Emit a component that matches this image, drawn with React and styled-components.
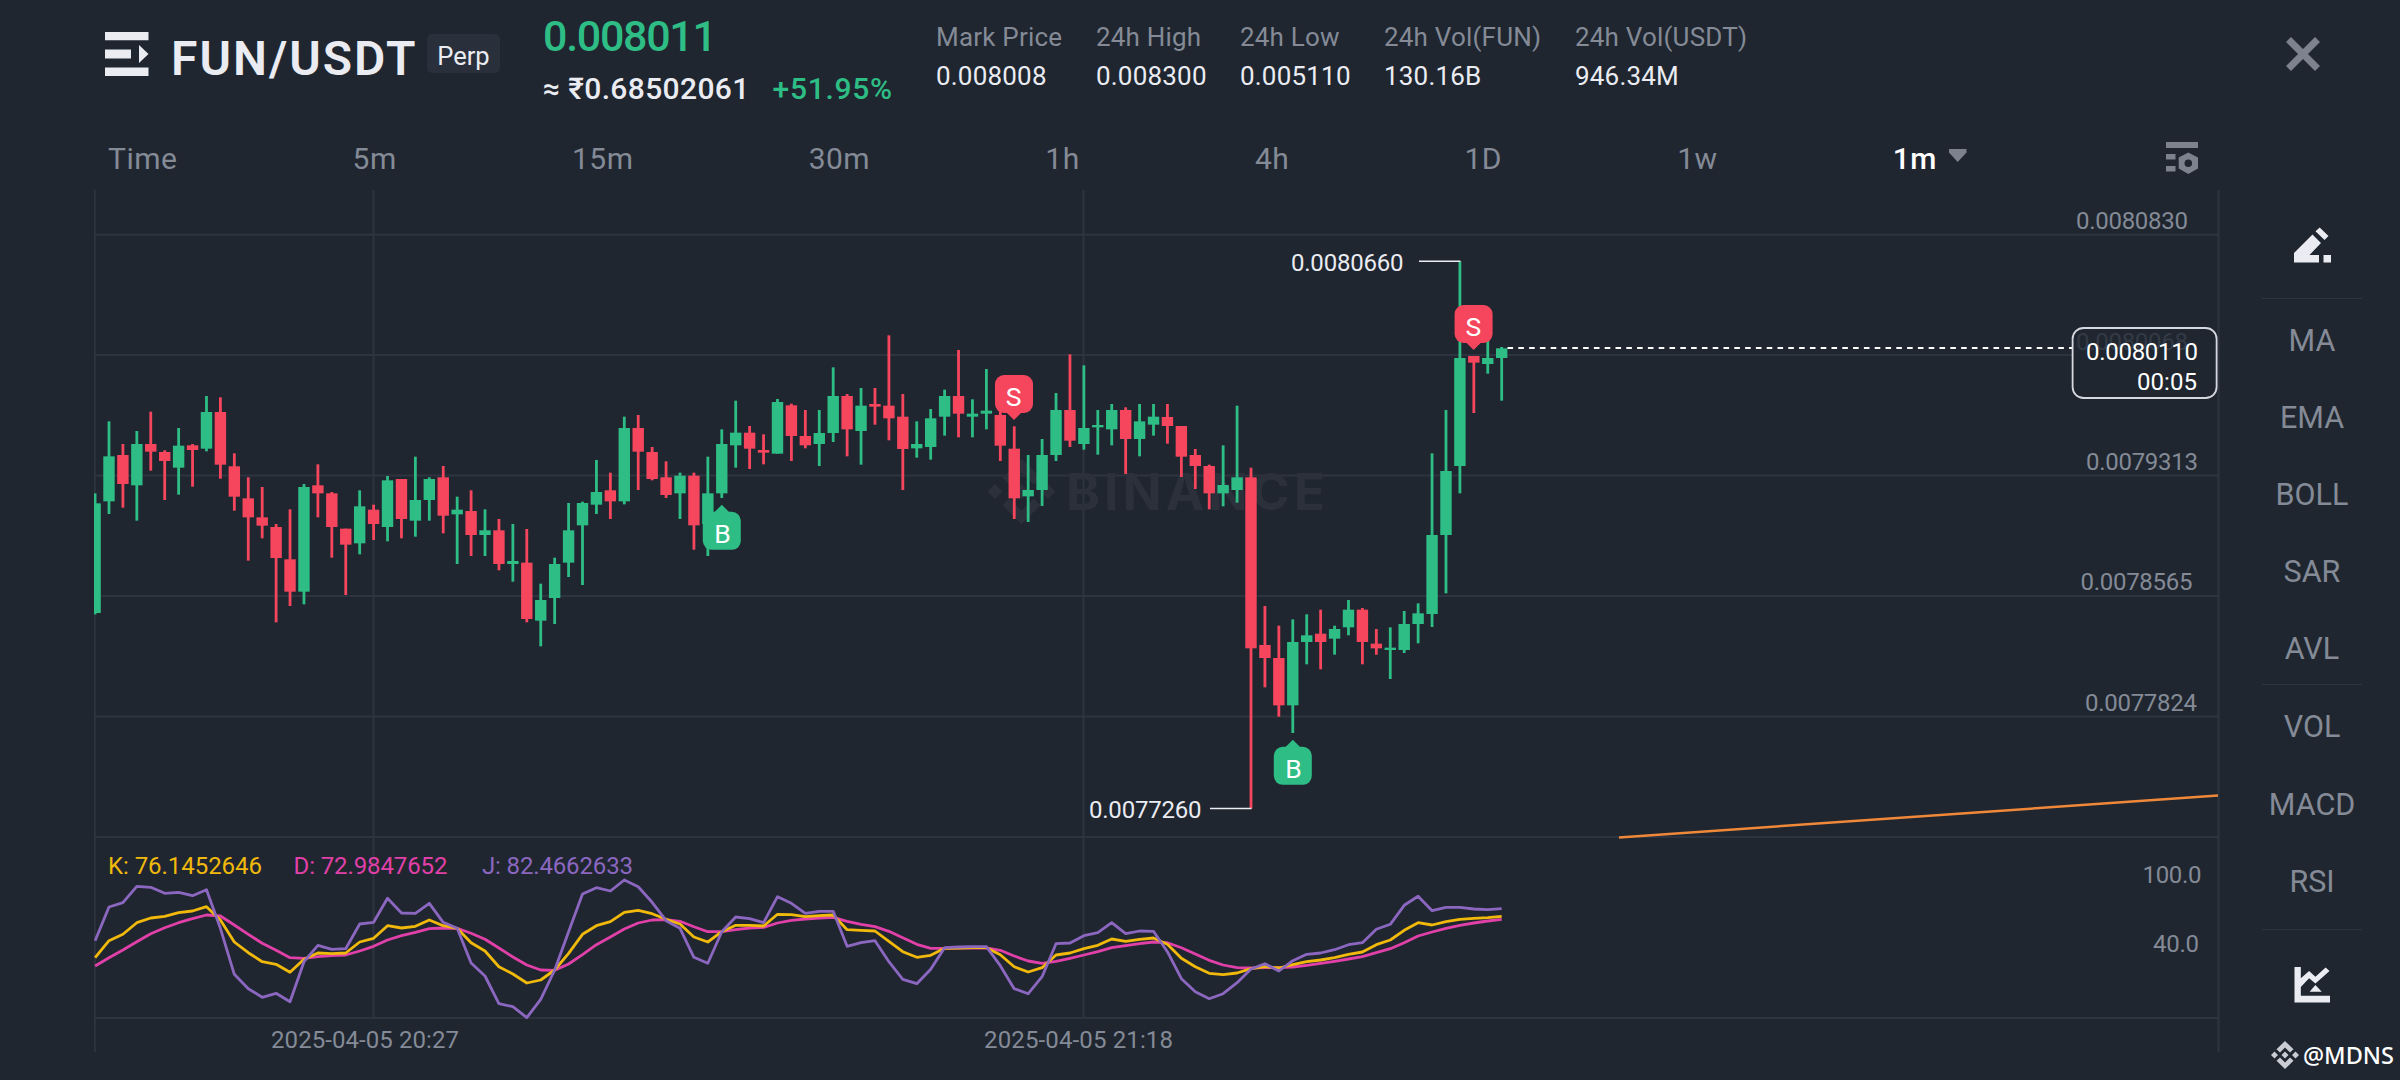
import React, { useState } from "react";
import styled, { createGlobalStyle } from "styled-components";

const UP = "#2ebd85";
const DOWN = "#f6465d";
const GRID = "#2e343f";
const MUTED = "#848a96";
const WHITE = "#eaecf2";

const FIRST_X = 95.06;
const STEP = 13.927;
const xOf = (i) => FIRST_X + STEP * i;

// each bar: direction, high, body top, body bottom, low (thirds of a pixel below `top`)
const segments = [
  {
    top: 350,
    bars: [
      ["u", 430, 460, 789, 793],
      ["u", 214, 319, 454, 492],
      ["d", 282, 315, 402, 473],
      ["u", 243, 282, 406, 512],
      ["d", 185, 282, 305, 362],
      ["d", 301, 306, 333, 450],
      ["u", 234, 287, 353, 434],
      ["d", 282, 286, 300, 410],
      ["u", 138, 186, 296, 304],
      ["d", 142, 186, 344, 386],
      ["d", 310, 349, 440, 482],
      ["d", 382, 445, 502, 632],
      ["d", 411, 502, 527, 565],
      ["d", 522, 531, 624, 817],
      ["d", 478, 628, 725, 768],
      ["u", 402, 411, 725, 763],
      ["d", 343, 406, 430, 502],
      ["d", 426, 430, 531, 623],
      ["d", 536, 536, 584, 735],
      ["u", 421, 469, 580, 613],
      ["d", 464, 479, 522, 570],
      ["u", 378, 391, 531, 574],
      ["d", 387, 387, 507, 565],
      ["u", 320, 450, 512, 560],
      ["u", 382, 387, 450, 512],
      ["d", 348, 382, 497, 550],
      ["u", 440, 479, 493, 642],
      ["d", 421, 483, 555, 618],
      ["u", 478, 541, 555, 618],
      ["d", 507, 541, 642, 661],
      ["u", 522, 633, 642, 695],
      ["d", 537, 638, 807, 817],
      ["u", 701, 750, 812, 889],
      ["u", 623, 642, 744, 822],
      ["u", 459, 541, 638, 681],
      ["u", 455, 459, 526, 705],
      ["u", 330, 426, 464, 492],
      ["d", 368, 421, 454, 507],
      ["u", 200, 234, 454, 463],
      ["d", 195, 234, 305, 420],
      ["d", 291, 306, 387, 391],
      ["d", 334, 382, 435, 444],
      ["u", 368, 377, 430, 507],
      ["d", 368, 377, 526, 599],
      ["u", 320, 430, 522, 618],
      ["u", 238, 282, 430, 444],
      ["u", 152, 248, 286, 353],
      ["d", 228, 248, 296, 357],
      ["d", 253, 300, 308, 343],
      ["u", 147, 156, 311, 311],
      ["d", 161, 166, 258, 333],
    ],
  },
  {
    top: 320,
    bars: [
      ["d", 270, 348, 376, 385],
      ["u", 270, 339, 372, 438],
      ["u", 142, 228, 339, 366],
      ["d", 222, 228, 328, 409],
      ["u", 204, 257, 333, 434],
      ["d", 204, 252, 260, 314],
      ["d", 46, 257, 295, 361],
      ["d", 222, 290, 387, 510],
      ["u", 304, 372, 385, 413],
      ["u", 267, 295, 381, 419],
      ["u", 209, 228, 290, 347],
      ["d", 90, 228, 281, 352],
      ["u", 238, 281, 290, 352],
      ["u", 147, 272, 281, 328],
      ["d", 262, 285, 377, 423],
      ["d", 319, 386, 535, 597],
      ["u", 405, 510, 529, 606],
      ["u", 357, 405, 510, 558],
      ["u", 219, 270, 405, 423],
      ["d", 103, 270, 362, 381],
      ["u", 136, 324, 372, 389],
      ["u", 270, 315, 322, 404],
      ["u", 252, 270, 328, 376],
      ["d", 262, 270, 357, 462],
      ["u", 252, 304, 357, 409],
      ["u", 252, 290, 314, 347],
    ],
  },
  {
    top: 330,
    bars: [
      ["d", 222, 261, 288, 341],
      ["d", 288, 288, 380, 441],
      ["d", 357, 375, 408, 477],
      ["d", 404, 408, 490, 538],
      ["u", 346, 465, 490, 529],
      ["u", 227, 442, 480, 518],
      ["d", 413, 442, 955, 1436],
      ["d", 828, 945, 984, 1072],
      ["d", 887, 984, 1126, 1160],
      ["u", 868, 936, 1126, 1209],
      ["u", 853, 916, 936, 1003],
      ["d", 839, 911, 936, 1018],
      ["u", 887, 897, 926, 974],
      ["u", 810, 839, 892, 916],
      ["d", 834, 839, 936, 1003],
      ["d", 897, 941, 955, 974],
      ["u", 892, 953, 960, 1047],
      ["u", 843, 882, 960, 969],
      ["u", 820, 850, 882, 940],
    ],
  },
  {
    top: 220,
    bars: [
      ["u", 700, 945, 1182, 1221],
      ["u", 570, 753, 945, 1120],
      ["u", 124, 414, 738, 820],
      ["d", 408, 408, 428, 579],
      ["u", 340, 414, 432, 461],
      ["u", 381, 385, 414, 542],
    ],
  },
];

const candles = segments
  .flatMap(({ top, bars }) =>
    bars.map(([dir, ...ys]) => [dir, ...ys.map((y) => top + y / 3)])
  )
  .map(([dir, high, open, close, low], i) => ({
    x: xOf(i),
    color: dir === "u" ? UP : DOWN,
    high,
    open,
    close,
    low,
  }));

const kdj = [
  {
    name: "D",
    color: "#e040a8",
    values: [
      438, 413, 390, 365, 341, 323, 308, 296, 285, 288, 315, 343, 370, 391, 413,
      415, 410, 407, 405, 393, 379, 360, 347, 337, 326, 324, 325, 340, 358, 384,
      411, 435, 450, 451, 432, 404, 374, 351, 327, 309, 300, 299, 304, 320, 335,
      335, 329, 324, 322, 309, 301, 297, 294, 292, 304, 313, 320, 334, 353, 373,
      385, 385, 384, 384, 384, 391, 408, 423, 430, 424, 415, 405, 395, 383, 377,
      371, 366, 368, 383, 402, 421, 435, 443, 444, 443, 443, 441, 436, 430, 424,
      417, 410, 398, 386, 368, 348, 336, 325, 316, 309, 303, 298,
    ],
  },
  {
    name: "K",
    color: "#f0b90b",
    values: [
      413, 362, 343, 308, 294, 289, 278, 273, 260, 300, 366, 398, 425, 433, 457,
      418, 399, 401, 399, 366, 355, 317, 324, 319, 300, 317, 325, 368, 393, 440,
      462, 489, 480, 450, 400, 343, 317, 305, 277, 271, 281, 298, 312, 351, 366,
      335, 316, 316, 318, 283, 284, 290, 287, 285, 329, 331, 333, 364, 395, 412,
      406, 385, 384, 383, 383, 404, 440, 456, 443, 405, 399, 386, 376, 357, 364,
      358, 354, 373, 415, 440, 460, 464, 459, 446, 440, 444, 434, 425, 420, 413,
      403, 396, 374, 360, 331, 308, 315, 305, 298, 295, 293, 289,
    ],
  },
  {
    name: "J",
    color: "#8b67c0",
    values: [
      362, 261, 248, 199, 202, 220, 217, 227, 209, 325, 463, 506, 532, 520, 545,
      425, 376, 388, 386, 312, 307, 235, 279, 280, 250, 307, 325, 429, 468, 551,
      560, 593, 538, 450, 335, 222, 203, 213, 180, 200, 247, 302, 325, 412, 430,
      335, 291, 296, 308, 230, 250, 280, 274, 274, 379, 368, 362, 425, 478, 491,
      448, 383, 381, 380, 380, 437, 506, 521, 470, 371, 369, 347, 338, 308, 341,
      333, 334, 395, 476, 515, 536, 521, 488, 447, 431, 453, 422, 403, 399, 389,
      374, 368, 328, 313, 256, 229, 272, 262, 262, 267, 269, 266,
    ],
  },
];

const kdjPoints = (values) =>
  values.map((v, i) => `${xOf(i).toFixed(1)},${(820 + v / 3).toFixed(1)}`).join(" ");

const stats = [
  { label: "Mark Price", value: "0.008008", width: 160 },
  { label: "24h High", value: "0.008300", width: 144 },
  { label: "24h Low", value: "0.005110", width: 144 },
  { label: "24h Vol(FUN)", value: "130.16B", width: 191 },
  { label: "24h Vol(USDT)", value: "946.34M", width: 190 },
];

const intervals = ["Time", "5m", "15m", "30m", "1h", "4h", "1D", "1w", "1m"];

const priceLabels = [
  { x: 2076, y: 229, text: "0.0080830" },
  { x: 2086, y: 470, text: "0.0079313" },
  { x: 2080.5, y: 589.7, text: "0.0078565" },
  { x: 2085, y: 711, text: "0.0077824" },
];

const trades = [
  { x: 1014, y: 394, side: "S" },
  { x: 1473.6, y: 324, side: "S" },
  { x: 721.8, y: 530.8, side: "B" },
  { x: 1292.8, y: 765.8, side: "B" },
];

function TradeMark({ x, y, side }) {
  const buy = side === "B";
  return (
    <g transform={`translate(${x} ${y})`} fill={buy ? UP : DOWN}>
      <rect x="-19" y="-19" width="38" height="38" rx="9" />
      <path d={buy ? "M-8 -18L0 -26L8 -18Z" : "M-8 18L0 26L8 18Z"} />
      <Label x={buy ? 0.8 : -0.3} y="11.800" fontSize="26.500" textAnchor="middle" fill="#fff">
        {side}
      </Label>
    </g>
  );
}

function Chart() {
  return (
    <ChartSvg viewBox="94 190 2126 862">
      <g stroke={GRID} strokeWidth="2">
        {[234.8, 355, 475.5, 596, 716.5, 837, 1018].map((y) => (
          <line key={y} x1="94" x2="2218" y1={y} y2={y} />
        ))}
        <line x1="373.5" x2="373.5" y1="190" y2="1018" />
        <line x1="1083.5" x2="1083.5" y1="190" y2="1018" />
        <line x1="94.8" x2="94.8" y1="190" y2="1052" />
        <line x1="2218.5" x2="2218.5" y1="190" y2="1052" />
      </g>

      <g fill="#2b303b">
        <g transform="translate(1021.5 491.5) scale(1.06)">
          <path d="M0 -31L18 -13L11.500 -6.500L0 -18L-11.500 -6.500L-18 -13Z" />
          <path d="M0 31L18 13L11.500 6.500L0 18L-11.500 6.500L-18 13Z" />
          <path d="M0 -7L7 0L0 7L-7 0Z" />
          <path d="M-25 -7L-18 0L-25 7L-32 0Z" />
          <path d="M25 -7L32 0L25 7L18 0Z" />
        </g>
        <text
          x="1066"
          y="509.800"
          fontFamily="Inter, sans-serif"
          fontWeight="700"
          fontSize="51.500"
          textLength="259"
        >
          BINANCE
        </text>
      </g>

      <path d="M1619 837.500Q1900 816.500 2218 795.500" fill="none" stroke="#f0883a" strokeWidth="2.500" />

      {candles.map(({ x, color, high, open, close, low }, i) => (
        <g key={i} fill={color}>
          <rect x={x - 1.4} y={high} width="2.8" height={low - high} />
          <rect
            x={Math.max(x - 5.7, 94.5)}
            y={open}
            width={i ? 11.4 : 6.3}
            height={close - open}
          />
        </g>
      ))}

      <line
        x1="1507.5"
        x2="2072"
        y1="348"
        y2="348"
        stroke="#fff"
        strokeWidth="1.8"
        strokeDasharray="5.6 5.2"
      />
      <path d="M1419 261.300H1460.500M1210 808.500H1251.500" stroke={WHITE} strokeWidth="1.600" />
      <Label x="1291" y="271" fill={WHITE} textLength="112.500">
        0.0080660
      </Label>
      <Label x="1089" y="818" fill={WHITE} textLength="112.500">
        0.0077260
      </Label>

      {trades.map((t) => (
        <TradeMark key={t.x} {...t} />
      ))}

      {priceLabels.map(({ x, y, text }) => (
        <Label key={text} x={x} y={y} textLength="112">
          {text}
        </Label>
      ))}
      <Label x="2142.500" y="883" textLength="59">100.0</Label>
      <Label x="2153" y="951.500" textLength="46">40.0</Label>

      <rect x="2072.600" y="328" width="144" height="70" rx="11" fill="#1f2630" stroke="#d5d8df" strokeWidth="1.800" />
      <Label x="2076" y="350" fill="#343a45" textLength="112">
        0.0080068
      </Label>
      <Label x="2086" y="360" fill="#fff" textLength="112">
        0.0080110
      </Label>
      <Label x="2137" y="390" fill="#fff" textLength="60">
        00:05
      </Label>

      {kdj.map(({ name, color, values }) => (
        <polyline
          key={name}
          points={kdjPoints(values)}
          fill="none"
          stroke={color}
          strokeWidth="2.800"
          strokeLinejoin="round"
        />
      ))}
      <Label x="108" y="874" fill="#f0b90b" textLength="154">
        K: 76.1452646
      </Label>
      <Label x="293.500" y="874" fill="#e040a8" textLength="154">
        D: 72.9847652
      </Label>
      <Label x="482" y="874" fill="#8b67c0" textLength="151">
        J: 82.4662633
      </Label>
      <Label x="271" y="1048" textLength="188">
        2025-04-05 20:27
      </Label>
      <Label x="984" y="1048" textLength="189">
        2025-04-05 21:18
      </Label>
    </ChartSvg>
  );
}

function App() {
  const [active, setActive] = useState("1m");

  return (
    <Screen>
      <GlobalStyle />
      <Header>
        <MenuIcon viewBox="0 0 44 44">
          <path d="M0 0H43.500V8.200H0ZM0 17.500H26V26.500H0ZM0 35.600H43.500V44H0ZM34 13L43.500 22L34 31Z" />
        </MenuIcon>
        <Pair>FUN/USDT</Pair>
        <Badge>Perp</Badge>
        <Quote>
          <LastPrice>0.008011</LastPrice>
          <SubPrice>
            <span>≈ ₹0.68502061</span>
            <Change>+51.95%</Change>
          </SubPrice>
        </Quote>
        <Stats>
          {stats.map(({ label, value, width }) => (
            <Stat key={label} $width={width}>
              <StatLabel>{label}</StatLabel>
              <StatValue>{value}</StatValue>
            </Stat>
          ))}
        </Stats>
        <CloseButton>
          <svg width="34" height="34" viewBox="0 0 34 34">
            <path d="M2.500 2.500L31.500 31.500M31.500 2.500L2.500 31.500" stroke="#7d828e" strokeWidth="7" />
          </svg>
        </CloseButton>
      </Header>

      <Body>
        <Main>
          <Toolbar>
            <Intervals>
              {intervals.map((name) => (
                <Interval
                  key={name}
                  $active={name === active}
                  onClick={() => setActive(name)}
                >
                  {name}
                  {name === "1m" && (
                    <Arrow viewBox="0 0 18 13">
                      <path d="M0 0H17.500V3.500L8.700 13L0 3.500Z" />
                    </Arrow>
                  )}
                </Interval>
              ))}
            </Intervals>
            <SettingsIcon viewBox="0 0 32 32">
              <path d="M0 0H32V6H0ZM0 12H9.500V17.500H0ZM0 24H9.500V29.500H0Z" />
              <path
                fillRule="evenodd"
                d="M22.300 10.500L32 15.500V26.500L22.300 32L12.700 26.500V15.500ZM22.300 17.400A3.800 3.800 0 1 0 22.300 25A3.800 3.800 0 1 0 22.300 17.400Z"
              />
            </SettingsIcon>
          </Toolbar>
          <Chart />
        </Main>

        <Sidebar>
          <ToolIcon viewBox="0 0 37 35">
            <path d="M0 25.500L18.500 7L27 15.500L15.500 27.500H25V35H0ZM21.500 3.800L25.700 0L34.500 8.500L30.500 12.500ZM29.500 27.500H37V35H29.500Z" />
          </ToolIcon>
          <Indicators>
            {["MA", "EMA", "BOLL", "SAR", "AVL"].map((name) => (
              <Indicator key={name}>{name}</Indicator>
            ))}
          </Indicators>
          <Indicators>
            {["VOL", "MACD", "RSI"].map((name) => (
              <Indicator key={name}>{name}</Indicator>
            ))}
          </Indicators>
          <Footer>
            <ToolIcon viewBox="0 0 37 37">
              <path d="M0 0H6.500V11.500L15 4L21.500 10L32 0.500L36 4L21.500 17L15 11.500L6.500 20.500V29.500H36.500V36.500H0Z" />
              <path d="M21.500 18.500L28 25.500H15.500Z" />
            </ToolIcon>
          </Footer>
          <Author>
            <svg width="28" height="28" viewBox="0 0 28 28" fill="#c9ccd3">
              <path d="M14 0L22.500 8.200L19 11.500L14 6.500L9 11.500L5.500 8.200ZM14 28L22.500 19.800L19 16.500L14 21.500L9 16.500L5.500 19.800ZM14 10.500L17.500 14L14 17.500L10.500 14ZM3.500 10.500L7 14L3.500 17.500L0 14ZM24.500 10.500L28 14L24.500 17.500L21 14Z" />
            </svg>
            @MDNS
          </Author>
        </Sidebar>
      </Body>
    </Screen>
  );
}

export default App;

const GlobalStyle = createGlobalStyle`
  body {
    margin: 0;
    background: #1f2630;
  }
`;

const Screen = styled.div`
  display: flex;
  flex-direction: column;
  width: 2400px;
  height: 1080px;
  overflow: hidden;
  background: #1f2630;
  color: ${WHITE};
  font-family: Roboto, "Liberation Sans", sans-serif;
`;

const Header = styled.header`
  display: flex;
  align-items: flex-start;
  height: 130px;
  padding: 0 80px 0 105px;
  box-sizing: border-box;
`;

const MenuIcon = styled.svg`
  width: 44px;
  height: 44px;
  margin-top: 32px;
  fill: ${WHITE};
`;

const Pair = styled.h1`
  width: 256px;
  margin: 29px 0 0 22px;
  font-size: 48px;
  font-weight: 600;
  line-height: 60px;
  letter-spacing: 2px;
`;

const Badge = styled.span`
  width: 73px;
  height: 39px;
  margin-top: 34px;
  border-radius: 5px;
  background: #2a303b;
  font-size: 25.5px;
  line-height: 44px;
  text-align: center;
`;

const Quote = styled.div`
  width: 393px;
  margin-left: 43px;
  padding-top: 11px;
  box-sizing: border-box;
`;

const LastPrice = styled.div`
  color: ${UP};
  font-size: 43px;
  font-weight: 500;
  line-height: 50px;
  letter-spacing: -1.3px;
`;

const SubPrice = styled.div`
  display: flex;
  gap: 23px;
  margin-top: 12px;
  font-size: 30px;
  font-weight: 500;
  line-height: 31px;
  letter-spacing: 0.35px;
`;

const Change = styled.span`
  color: ${UP};
  letter-spacing: 0.7px;
`;

const Stats = styled.div`
  display: flex;
  padding-top: 20px;
`;

const Stat = styled.div`
  width: ${({ $width }) => $width}px;
  font-size: 26px;
  line-height: 34px;
  letter-spacing: 0.2px;
  white-space: nowrap;
`;

const StatLabel = styled.div`
  color: ${MUTED};
`;

const StatValue = styled.div`
  margin-top: 5px;
`;

const CloseButton = styled.button`
  display: flex;
  margin: 37px 0 0 auto;
  padding: 0;
  border: none;
  background: none;
`;

const Body = styled.div`
  display: flex;
  flex: 1;
`;

const Main = styled.main`
  width: 2126px;
  padding-left: 94px;
`;

const Toolbar = styled.div`
  display: flex;
  justify-content: space-between;
  align-items: center;
  height: 60px;
  padding: 0 22px 4px 14px;
  box-sizing: border-box;
`;

const Intervals = styled.nav`
  display: flex;
  justify-content: space-between;
  width: 1859px;
`;

const Interval = styled.button`
  display: flex;
  align-items: center;
  gap: 12px;
  padding: 2px 0 0;
  border: none;
  background: none;
  color: ${({ $active }) => ($active ? "#fff" : MUTED)};
  font-family: inherit;
  font-size: 30px;
  font-weight: ${({ $active }) => ($active ? 500 : 400)};
  line-height: 36px;
  letter-spacing: 0.5px;
`;

const Arrow = styled.svg`
  width: 18px;
  height: 13px;
  margin-bottom: 8px;
  fill: #7d828e;
`;

const SettingsIcon = styled.svg`
  width: 32px;
  height: 32px;
  fill: #7d828e;
`;

const ChartSvg = styled.svg`
  display: block;
  width: 2126px;
  height: 862px;
`;

const Label = styled.text.attrs(({ fill, fontSize }) => ({
  fill: fill || MUTED,
  fontSize: fontSize || 24,
}))`
  font-family: Roboto, "Liberation Sans", sans-serif;
`;

const Sidebar = styled.aside`
  display: flex;
  flex: 1;
  flex-direction: column;
  align-items: center;
  padding: 97px 3px 0 0;
  margin-left: 7px;
`;

const ToolIcon = styled.svg`
  width: 37px;
  height: 36px;
  fill: ${WHITE};
`;

const Indicators = styled.div`
  display: flex;
  flex-direction: column;
  align-items: center;
  width: 100px;
  border-top: 1px solid ${GRID};

  ${ToolIcon} + & {
    margin-top: 35px;
  }
`;

const Indicator = styled.div`
  height: 77.1px;
  color: ${MUTED};
  font-size: 30.5px;
  line-height: 83px;
`;

const Footer = styled.div`
  width: 100px;
  margin-top: 12px;
  padding-top: 37px;
  border-top: 1px solid ${GRID};
  text-align: center;
`;

const Author = styled.div`
  display: flex;
  align-items: center;
  gap: 4px;
  margin: 33px 0 0;
  align-self: flex-end;
  padding-right: 3px;
  color: #fff;
  font-family: "Noto Sans", sans-serif;
  font-size: 23.5px;
  font-weight: 500;
  line-height: 30px;
`;
